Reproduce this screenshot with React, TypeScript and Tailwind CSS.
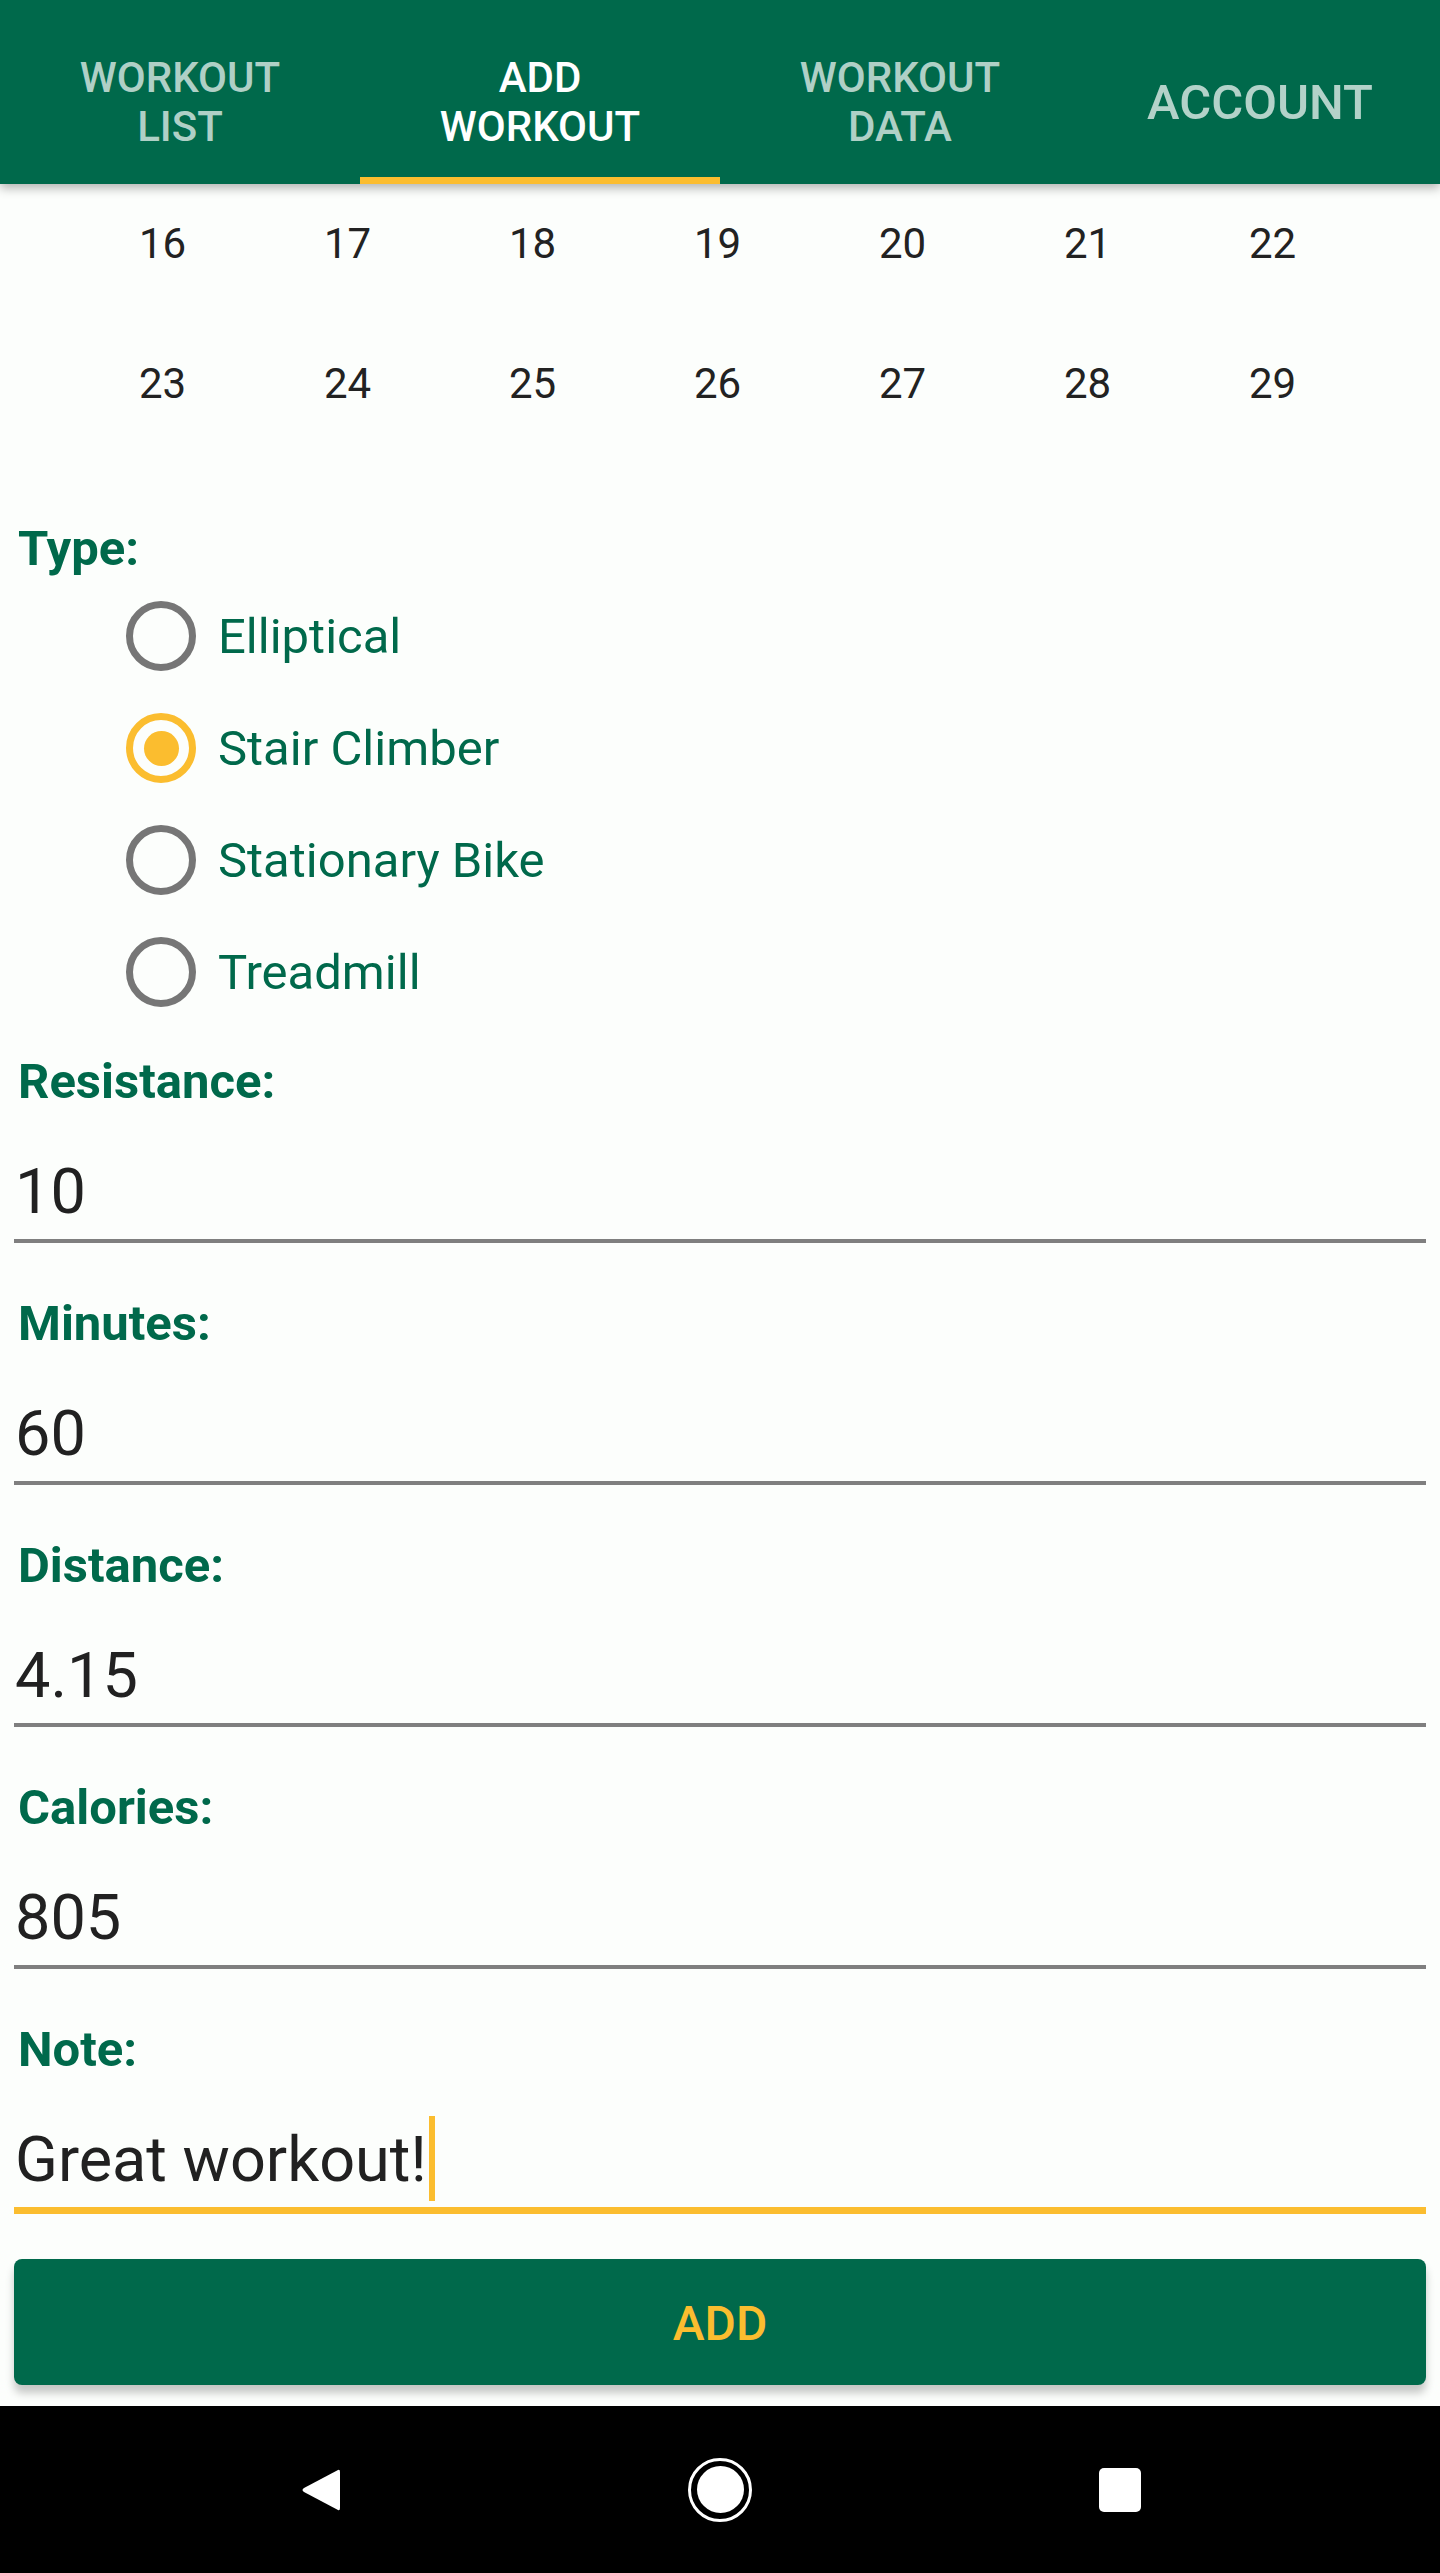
import { useState } from 'react';

const tabs = [
  { lines: ['WORKOUT', 'LIST'] },
  { lines: ['ADD', 'WORKOUT'], active: true },
  { lines: ['WORKOUT', 'DATA'] },
  { lines: ['ACCOUNT'] },
];

const weeks = [
  [16, 17, 18, 19, 20, 21, 22],
  [23, 24, 25, 26, 27, 28, 29],
];

const types = ['Elliptical', 'Stair Climber', 'Stationary Bike', 'Treadmill'];

const fields = [
  { label: 'Resistance:', value: '10' },
  { label: 'Minutes:', value: '60' },
  { label: 'Distance:', value: '4.15' },
  { label: 'Calories:', value: '805' },
];

const TabBar = () => (
  <div className="relative z-10 h-[184px] bg-[#00694b] shadow-[0_4px_10px_rgba(0,0,0,0.3)] flex">
    {tabs.map((tab, i) => (
      <div key={i} className="relative w-[360px] h-full flex items-center justify-center pt-[20px]">
        <div
          className={`flex flex-col items-center font-medium ${
            tab.lines.length > 1 ? 'text-[42px] leading-[49px]' : 'text-[49px] leading-[57px]'
          } ${tab.active ? 'text-white' : 'text-white/70'}`}
        >
          {tab.lines.map((l) => (
            <span key={l}>{l}</span>
          ))}
        </div>
        {tab.active && <div className="absolute bottom-0 left-0 right-0 h-[7px] bg-[#fbbd2f]" />}
      </div>
    ))}
  </div>
);

const Radio = ({ checked }: { checked: boolean }) => (
  <div
    className={`w-[70px] h-[70px] rounded-full border-[7px] flex items-center justify-center ${
      checked ? 'border-[#fbbd2f]' : 'border-[#767676]'
    }`}
  >
    {checked && <div className="w-[35px] h-[35px] rounded-full bg-[#fbbd2f]" />}
  </div>
);

const Label = ({ children }: { children: string }) => (
  <div className="pl-[18px] text-[49px] leading-[57px] font-bold text-[#00694b]">{children}</div>
);

const App = () => {
  const [type, setType] = useState('Stair Climber');

  return (
    <div className="w-[1440px] h-[2573px] bg-[#fcfefc] flex flex-col overflow-hidden" style={{ fontFamily: 'Roboto, "Noto Sans", sans-serif' }}>
      <TabBar />

      {/* calendar, scrolled under the tab bar */}
      <div className="mt-[-11px] pl-[70px] pr-[75px]">
        {weeks.map((w, i) => (
          <div key={i} className="grid grid-cols-7 h-[140px] items-center">
            {w.map((d) => (
              <div key={d} className="text-center text-[42px] leading-[49px] text-[#222]">
                {d}
              </div>
            ))}
          </div>
        ))}
      </div>

      <div className="mt-[67px]">
        <Label>Type:</Label>
        <div className="mt-[3px] pl-[126px] flex flex-col">
          {types.map((t) => (
            <div key={t} className="h-[112px] flex items-center gap-[22px] cursor-pointer" onClick={() => setType(t)}>
              <Radio checked={type === t} />
              <span className="text-[49px] leading-[57px] text-[#00694b]">{t}</span>
            </div>
          ))}
        </div>
      </div>

      <div className="mt-[25px] flex flex-col">
        {fields.map((f) => (
          <div key={f.label} className="mb-[52px]">
            <Label>{f.label}</Label>
            <div className="mx-[14px] mt-[45px] pb-[10px] border-b-[4px] border-[#7f7f7f]">
              <div className="pl-[1px] text-[63px] leading-[74px] text-[#212121]">{f.value}</div>
            </div>
          </div>
        ))}
        <div>
          <Label>Note:</Label>
          <div className="mx-[14px] mt-[45px] pb-[10px] border-b-[7px] border-[#fbbd2f]">
            <div className="pl-[1px] h-[74px] text-[63px] leading-[74px] text-[#212121] flex items-center">
              <span>Great workout!</span>
              <span className="ml-[2px] mt-[-4px] w-[6px] h-[85px] shrink-0 bg-[#fbbd2f]" />
            </div>
          </div>
        </div>
      </div>

      <button className="mx-[14px] mt-[45px] h-[126px] pt-[4px] rounded-[8px] bg-[#00694b] shadow-[0_8px_8px_rgba(0,0,0,0.22)] text-[48px] font-medium text-[#fbbd2f]">
        ADD
      </button>

      <div className="mt-auto h-[167px] bg-black flex items-center">
        <div className="w-[640px] flex justify-center">
          <svg width="42" height="48" viewBox="0 0 42 48" className="ml-[2px]">
            <path d="M38 4 Q40 3 40 6 L40 42 Q40 45 38 44 L4 26 Q1 24 4 22 Z" fill="white" />
          </svg>
        </div>
        <div className="w-[160px] flex justify-center">
          <div className="w-[64px] h-[64px] rounded-full border-[3px] border-white flex items-center justify-center">
            <div className="w-[47px] h-[47px] rounded-full bg-white" />
          </div>
        </div>
        <div className="w-[640px] flex justify-center">
          <div className="w-[42px] h-[44px] rounded-[5px] bg-white" />
        </div>
      </div>
    </div>
  );
};

export default App;
